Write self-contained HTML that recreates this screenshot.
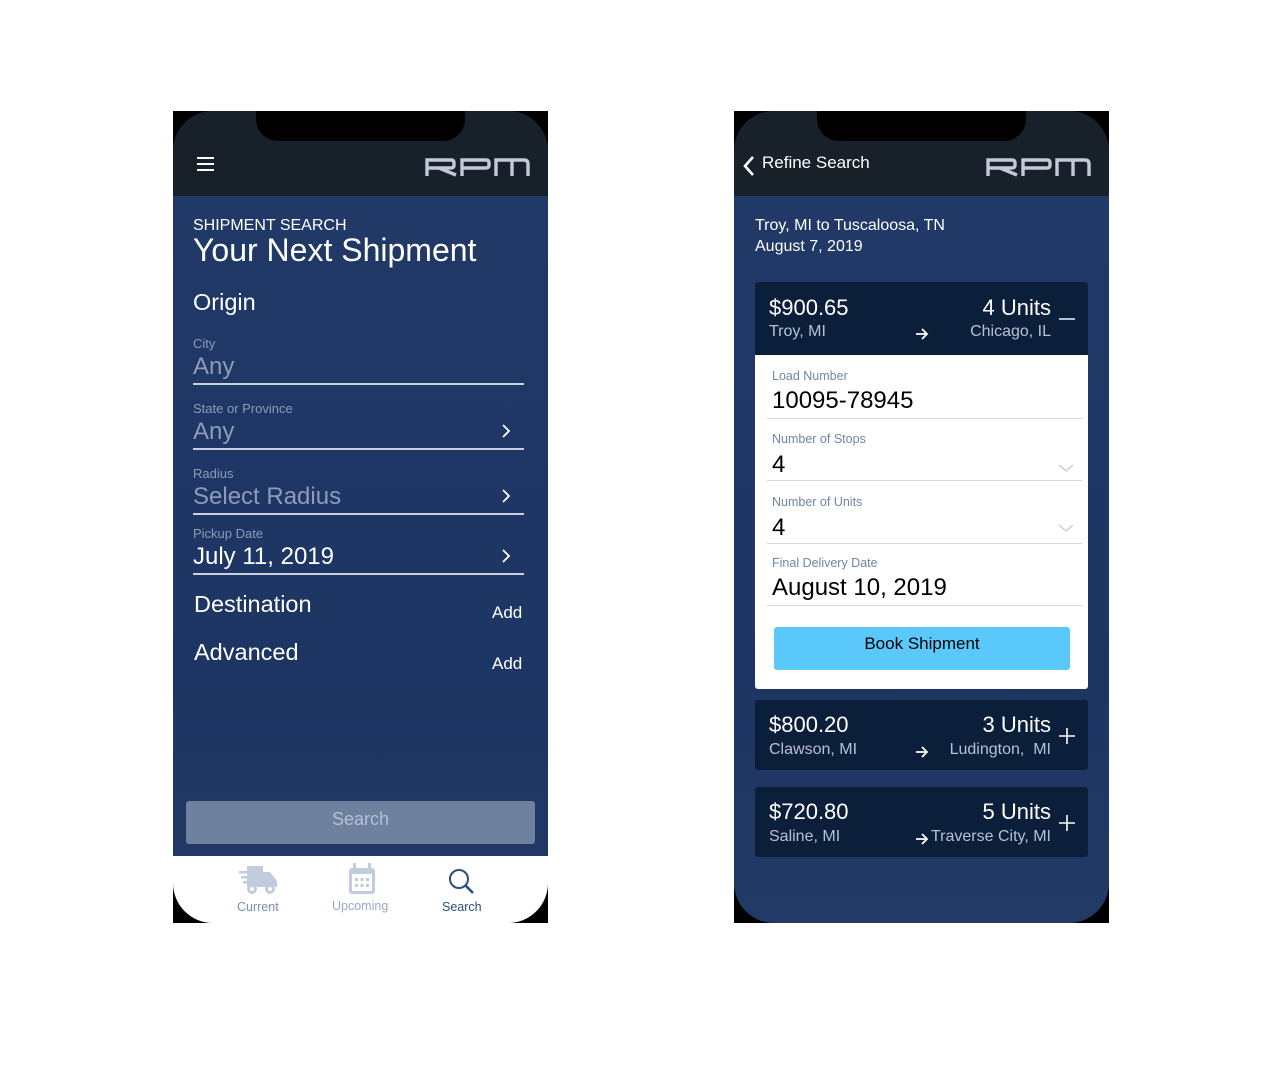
<!DOCTYPE html>
<html><head><meta charset="utf-8"><style>
*{margin:0;padding:0;box-sizing:border-box}
body{width:1280px;height:1080px;background:#fff;font-family:"Liberation Sans",Arial,sans-serif;position:relative;overflow:hidden}
.ph{position:absolute;top:111px;width:375px;height:812px;background:#000}
.scr{position:absolute;left:0;top:0;width:375px;height:812px;border-radius:40px;overflow:hidden;background:linear-gradient(180deg,#223a66 0%,#1f3766 40%,#1d3562 70%,#233a66 100%)}
.hdr{position:absolute;left:0;top:0;width:375px;height:85px;background:#18202a}
.notch{position:absolute;left:83px;top:0;width:209px;height:30px;background:#000;border-radius:0 0 22px 22px}
.logo{position:absolute;left:252px;top:46px}
.a{position:absolute;white-space:nowrap}
.w{color:#fff}
.lbl{font-size:13px;color:#8e9bb5}
.val{font-size:24px;color:#8e9bb5}
.line{position:absolute;left:20px;width:331px;height:2px;background:#c9d0dd}
.chev{position:absolute;left:327px;width:12px;height:16px}
.card{position:absolute;left:21px;width:333px;background:#0c1f3a;border-radius:3px}
</style></head><body>

<!-- LEFT PHONE -->
<div class="ph" style="left:173px">
<div class="scr">
 <div class="hdr"></div>
 <div class="notch"></div>
 <div class="a" style="left:24px;top:46px;width:17px">
  <div style="height:2px;background:#fff;margin-bottom:4px"></div>
  <div style="height:2px;background:#fff;margin-bottom:4px"></div>
  <div style="height:2px;background:#fff"></div>
 </div>
 <svg class="logo" width="106" height="20" viewBox="0 0 106 20" aria-label="RPM" fill="none" stroke="#c3c9d8" stroke-width="3.4"><path d="M2,19V3H26Q29,3 29,6V8Q29,11 26,11H2M14,11L31,18"/><path d="M37,19V3H61Q64,3 64,6V8Q64,11 61,11H37"/><path d="M71,19V3H99Q103,3 103,7V19M87,3V19"/></svg>
 <div class="a w" style="left:20px;top:106px;font-size:16px">SHIPMENT SEARCH</div>
 <div class="a w" style="left:20px;top:121px;font-size:32px">Your Next Shipment</div>
 <div class="a w" style="left:20px;top:178px;font-size:23.5px">Origin</div>
 <div class="a lbl" style="left:20px;top:225px">City</div>
 <div class="a val" style="left:20px;top:242px">Any</div>
 <div class="line" style="top:272px"></div>
 <div class="a lbl" style="left:20px;top:290px">State or Province</div>
 <div class="a val" style="left:20px;top:307px">Any</div>
 <svg class="chev" style="top:312px" viewBox="0 0 12 16"><path d="M3,2L9,8L3,14" stroke="#fff" stroke-width="1.8" fill="none"/></svg>
 <div class="line" style="top:337px"></div>
 <div class="a lbl" style="left:20px;top:355px">Radius</div>
 <div class="a val" style="left:20px;top:372px">Select Radius</div>
 <svg class="chev" style="top:377px" viewBox="0 0 12 16"><path d="M3,2L9,8L3,14" stroke="#fff" stroke-width="1.8" fill="none"/></svg>
 <div class="line" style="top:402px"></div>
 <div class="a lbl" style="left:20px;top:415px">Pickup Date</div>
 <div class="a w" style="left:20px;top:432px;font-size:24px">July 11, 2019</div>
 <svg class="chev" style="top:437px" viewBox="0 0 12 16"><path d="M3,2L9,8L3,14" stroke="#fff" stroke-width="1.8" fill="none"/></svg>
 <div class="line" style="top:462px"></div>
 <div class="a w" style="left:21px;top:480px;font-size:23.5px">Destination</div>
 <div class="a w" style="left:319px;top:492px;font-size:17px">Add</div>
 <div class="a w" style="left:21px;top:528px;font-size:23.5px">Advanced</div>
 <div class="a w" style="left:319px;top:543px;font-size:17px">Add</div>
 <div class="a" style="left:13px;top:690px;width:349px;height:43px;background:#6e819f;border-radius:3px;color:#b6c1d4;font-size:18px;text-align:center;line-height:37px">Search</div>
 <div class="a" style="left:0;top:745px;width:375px;height:67px;background:#fff"></div>
 <svg class="a" style="left:66px;top:752px" width="40" height="34" viewBox="0 0 40 34"><g fill="#c3cbde"><rect x="0" y="8" width="10" height="2.5"/><rect x="2" y="13" width="8" height="2.5"/><rect x="4" y="18" width="6" height="2.5"/><path d="M8,3H24V24H8Z"/><path d="M24,9H31L38,18V24H24Z"/><circle cx="13" cy="26" r="5"/><circle cx="31" cy="26" r="5"/></g><circle cx="13" cy="26" r="2" fill="#fff"/><circle cx="31" cy="26" r="2" fill="#fff"/></svg>
 <div class="a" style="left:64px;top:789px;font-size:12.5px;color:#7b8eb3">Current</div>
 <svg class="a" style="left:175px;top:752px" width="28" height="32" viewBox="0 0 28 32"><rect x="1" y="5" width="26" height="26" rx="3" fill="#c3cbde"/><rect x="5" y="0" width="3" height="8" fill="#c3cbde"/><rect x="20" y="0" width="3" height="8" fill="#c3cbde"/><rect x="4" y="11" width="20" height="17" fill="#fff"/><g fill="#c3cbde"><rect x="7" y="15" width="3" height="3"/><rect x="12.5" y="15" width="3" height="3"/><rect x="18" y="15" width="3" height="3"/><rect x="7" y="21" width="3" height="3"/><rect x="12.5" y="21" width="3" height="3"/><rect x="18" y="21" width="3" height="3"/></g></svg>
 <div class="a" style="left:159px;top:788px;font-size:12.5px;color:#9aa8c6">Upcoming</div>
 <svg class="a" style="left:275px;top:757px" width="28" height="28" viewBox="0 0 28 28"><circle cx="11" cy="11" r="9" stroke="#2d4f7a" stroke-width="2" fill="none"/><path d="M17.5,17.5L25,25" stroke="#2d4f7a" stroke-width="2.6"/></svg>
 <div class="a" style="left:269px;top:789px;font-size:12.5px;color:#2d4f7a">Search</div>
</div>
</div>

<!-- RIGHT PHONE -->
<div class="ph" style="left:734px">
<div class="scr">
 <div class="hdr"></div>
 <div class="notch"></div>
 <svg class="a" style="left:8px;top:44px" width="14" height="22" viewBox="0 0 14 22"><path d="M11,2L3,11L11,20" stroke="#fff" stroke-width="2.6" fill="none"/></svg>
 <div class="a w" style="left:28px;top:42px;font-size:17px">Refine Search</div>
 <svg class="logo" width="106" height="20" viewBox="0 0 106 20" aria-label="RPM" fill="none" stroke="#c3c9d8" stroke-width="3.4"><path d="M2,19V3H26Q29,3 29,6V8Q29,11 26,11H2M14,11L31,18"/><path d="M37,19V3H61Q64,3 64,6V8Q64,11 61,11H37"/><path d="M71,19V3H99Q103,3 103,7V19M87,3V19"/></svg>
 <div class="a w" style="left:21px;top:106px;font-size:16px">Troy, MI to Tuscaloosa, TN</div>
 <div class="a w" style="left:21px;top:127px;font-size:16px">August 7, 2019</div>

 <div class="card" style="top:171px;height:74px"></div>
 <div class="a w" style="left:35px;top:184px;font-size:22px">$900.65</div>
 <div class="a" style="left:35px;top:212px;font-size:16px;color:#b7c0d3">Troy, MI</div>
 <div class="a w" style="right:58px;top:184px;font-size:22px">4 Units</div>
 <div class="a" style="right:58px;top:212px;font-size:16px;color:#b7c0d3">Chicago, IL</div>
 <div class="a" style="left:325px;top:207px;width:16px;height:2px;background:#b7c0d3"></div>
 <svg class="a" style="left:180px;top:216px" width="16" height="14" viewBox="0 0 16 14"><path d="M2,7H13M8,2L13,7L8,12" stroke="#fff" stroke-width="1.8" fill="none"/></svg>

 <div class="a" style="left:21px;top:244px;width:333px;height:334px;background:#fff;border-radius:0 0 3px 3px"></div>
 <div class="a" style="left:38px;top:258px;font-size:12.5px;color:#7185a8">Load Number</div>
 <div class="a" style="left:38px;top:276px;font-size:24px;color:#000">10095-78945</div>
 <div class="a" style="left:33px;top:307px;width:315px;height:1px;background:#d4d7dc"></div>
 <div class="a" style="left:38px;top:321px;font-size:12.5px;color:#7185a8">Number of Stops</div>
 <div class="a" style="left:38px;top:340px;font-size:24px;color:#000">4</div>
 <svg class="a" style="left:324px;top:352px" width="16" height="10" viewBox="0 0 16 10"><path d="M1,2L8,8L15,2" stroke="#c8cdd5" stroke-width="1.4" fill="none"/></svg>
 <div class="a" style="left:33px;top:369px;width:315px;height:1px;background:#d4d7dc"></div>
 <div class="a" style="left:38px;top:384px;font-size:12.5px;color:#7185a8">Number of Units</div>
 <div class="a" style="left:38px;top:403px;font-size:24px;color:#000">4</div>
 <svg class="a" style="left:324px;top:412px" width="16" height="10" viewBox="0 0 16 10"><path d="M1,2L8,8L15,2" stroke="#c8cdd5" stroke-width="1.4" fill="none"/></svg>
 <div class="a" style="left:33px;top:432px;width:315px;height:1px;background:#d4d7dc"></div>
 <div class="a" style="left:38px;top:445px;font-size:12.5px;color:#7185a8">Final Delivery Date</div>
 <div class="a" style="left:38px;top:463px;font-size:24px;color:#000">August 10, 2019</div>
 <div class="a" style="left:33px;top:494px;width:315px;height:1px;background:#d4d7dc"></div>
 <div class="a" style="left:40px;top:516px;width:296px;height:43px;background:#5ac8fa;border-radius:3px;text-align:center;line-height:34px;font-size:17px;color:#000">Book Shipment</div>

 <div class="card" style="top:589px;height:70px"></div>
 <div class="a w" style="left:35px;top:601px;font-size:22px">$800.20</div>
 <div class="a" style="left:35px;top:630px;font-size:16px;color:#b7c0d3">Clawson, MI</div>
 <div class="a w" style="right:58px;top:601px;font-size:22px">3 Units</div>
 <div class="a" style="right:58px;top:630px;font-size:16px;color:#b7c0d3">Ludington,&nbsp; MI</div>
 <svg class="a" style="left:180px;top:634px" width="16" height="14" viewBox="0 0 16 14"><path d="M2,7H13M8,2L13,7L8,12" stroke="#fff" stroke-width="1.8" fill="none"/></svg>
 <svg class="a" style="left:325px;top:617px" width="16" height="16" viewBox="0 0 16 16"><path d="M8,0V16M0,8H16" stroke="#fff" stroke-width="1.6"/></svg>

 <div class="card" style="top:676px;height:70px"></div>
 <div class="a w" style="left:35px;top:688px;font-size:22px">$720.80</div>
 <div class="a" style="left:35px;top:717px;font-size:16px;color:#b7c0d3">Saline, MI</div>
 <div class="a w" style="right:58px;top:688px;font-size:22px">5 Units</div>
 <div class="a" style="right:58px;top:717px;font-size:16px;color:#b7c0d3">Traverse City, MI</div>
 <svg class="a" style="left:180px;top:721px" width="16" height="14" viewBox="0 0 16 14"><path d="M2,7H13M8,2L13,7L8,12" stroke="#fff" stroke-width="1.8" fill="none"/></svg>
 <svg class="a" style="left:325px;top:704px" width="16" height="16" viewBox="0 0 16 16"><path d="M8,0V16M0,8H16" stroke="#fff" stroke-width="1.6"/></svg>
</div>
</div>
</body></html>
